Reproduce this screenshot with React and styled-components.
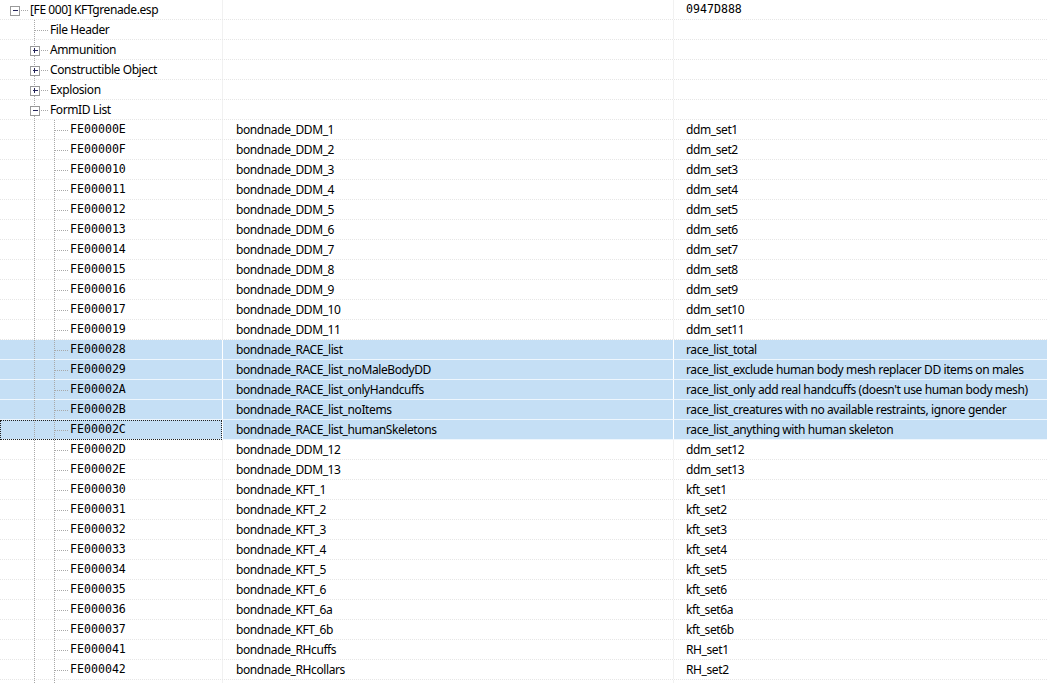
import React from 'react';
import styled, { createGlobalStyle } from 'styled-components';

const GlobalStyle = createGlobalStyle`
  html, body {
    margin: 0;
    padding: 0;
    background: #fff;
    overflow: hidden;
  }
`;

const TreeView = styled.div`
  width: 1047px;
  height: 683px;
  overflow: hidden;
  background: #fff;
  font-family: "Noto Sans", "Open Sans", sans-serif;
  font-size: 12px;
  letter-spacing: -0.4px;
  color: #000;
`;

const Row = styled.div`
  display: grid;
  grid-template-columns: 222px 451px 1fr;
  height: 20px;
  box-sizing: border-box;
  background: ${(p) => (p.$selected ? '#c5dff5' : '#fff')};
  border-bottom: 1px ${(p) => (p.$selected ? 'solid #eef6fd' : 'dotted #e6e6e6')};
`;

const NameCell = styled.div`
  display: flex;
  align-items: stretch;
  height: 20px;
  box-sizing: border-box;
  white-space: nowrap;
  outline: ${(p) => (p.$focused ? '1px dotted #222' : 'none')};
  outline-offset: -1px;
`;

const Label = styled.span`
  margin-left: 2px;
  line-height: 19px;
  font-family: ${(p) => (p.$mono ? '"DejaVu Sans Mono", monospace' : 'inherit')};
  font-size: ${(p) => (p.$mono ? '11.6px' : '12px')};
  letter-spacing: ${(p) => (p.$mono ? '0' : '-0.4px')};
`;

const Cell = styled.div`
  height: 19px;
  line-height: 19px;
  border-left: 1px solid ${(p) => (p.$selected ? '#ffffff' : '#f1f1f1')};
  padding-left: ${(p) => p.$pad}px;
  white-space: nowrap;
  overflow: hidden;
  font-family: ${(p) => (p.$mono ? '"DejaVu Sans Mono", monospace' : 'inherit')};
  font-size: ${(p) => (p.$mono ? '11.6px' : '12px')};
  letter-spacing: ${(p) => (p.$mono ? '0' : '-0.4px')};
`;

const Guide = styled.svg`
  flex: none;
  display: block;
`;

const LINE = '#a8a8a8';

// tree gutter: ancestor lines, own connector, and the +/- box
const TreeGutter = ({ level, expander }) => {
  const width = 28 + level * 20;
  const cx = 14.5 + level * 20;
  const parts = [];
  for (let k = 1; k < level; k++) {
    const x = 14.5 + k * 20;
    parts.push(<line key={'a' + k} x1={x} y1={0} x2={x} y2={21} stroke={LINE} strokeDasharray="1 1" />);
  }
  if (level > 0) {
    parts.push(<line key="v" x1={cx} y1={0} x2={cx} y2={21} stroke={LINE} strokeDasharray="1 1" />);
  }
  parts.push(<line key="h" x1={cx} y1={10.5} x2={cx + 13} y2={10.5} stroke={LINE} strokeDasharray="1 1" />);
  if (expander) {
    parts.push(
      <g key="box">
        <rect x={cx - 4.5} y={6} width={9} height={9} fill="#fff" stroke="#9a9a9a" />
        <line x1={cx - 2} y1={10.5} x2={cx + 3} y2={10.5} stroke="#26265a" />
        {expander === 'plus' && <line x1={cx} y1={8} x2={cx} y2={13} stroke="#26265a" />}
      </g>
    );
  }
  return (
    <Guide width={width} height={20} viewBox={`0 0 ${width} 20`} shapeRendering="crispEdges">
      {parts}
    </Guide>
  );
};

const header = [
  { level: 0, expander: 'minus', name: '[FE 000] KFTgrenade.esp', value: '0947D888', valueMono: true },
  { level: 1, name: 'File Header' },
  { level: 1, expander: 'plus', name: 'Ammunition' },
  { level: 1, expander: 'plus', name: 'Constructible Object' },
  { level: 1, expander: 'plus', name: 'Explosion' },
  { level: 1, expander: 'minus', name: 'FormID List' },
];

const records = [
  ['FE00000E', 'bondnade_DDM_1', 'ddm_set1'],
  ['FE00000F', 'bondnade_DDM_2', 'ddm_set2'],
  ['FE000010', 'bondnade_DDM_3', 'ddm_set3'],
  ['FE000011', 'bondnade_DDM_4', 'ddm_set4'],
  ['FE000012', 'bondnade_DDM_5', 'ddm_set5'],
  ['FE000013', 'bondnade_DDM_6', 'ddm_set6'],
  ['FE000014', 'bondnade_DDM_7', 'ddm_set7'],
  ['FE000015', 'bondnade_DDM_8', 'ddm_set8'],
  ['FE000016', 'bondnade_DDM_9', 'ddm_set9'],
  ['FE000017', 'bondnade_DDM_10', 'ddm_set10'],
  ['FE000019', 'bondnade_DDM_11', 'ddm_set11'],
  ['FE000028', 'bondnade_RACE_list', 'race_list_total', 'sel'],
  ['FE000029', 'bondnade_RACE_list_noMaleBodyDD', 'race_list_exclude human body mesh replacer DD items on males', 'sel'],
  ['FE00002A', 'bondnade_RACE_list_onlyHandcuffs', "race_list_only add real handcuffs (doesn't use human body mesh)", 'sel'],
  ['FE00002B', 'bondnade_RACE_list_noItems', 'race_list_creatures with no available restraints, ignore gender', 'sel'],
  ['FE00002C', 'bondnade_RACE_list_humanSkeletons', 'race_list_anything with human skeleton', 'focus'],
  ['FE00002D', 'bondnade_DDM_12', 'ddm_set12'],
  ['FE00002E', 'bondnade_DDM_13', 'ddm_set13'],
  ['FE000030', 'bondnade_KFT_1', 'kft_set1'],
  ['FE000031', 'bondnade_KFT_2', 'kft_set2'],
  ['FE000032', 'bondnade_KFT_3', 'kft_set3'],
  ['FE000033', 'bondnade_KFT_4', 'kft_set4'],
  ['FE000034', 'bondnade_KFT_5', 'kft_set5'],
  ['FE000035', 'bondnade_KFT_6', 'kft_set6'],
  ['FE000036', 'bondnade_KFT_6a', 'kft_set6a'],
  ['FE000037', 'bondnade_KFT_6b', 'kft_set6b'],
  ['FE000041', 'bondnade_RHcuffs', 'RH_set1'],
  ['FE000042', 'bondnade_RHcollars', 'RH_set2'],
];

const rows = [
  ...header,
  ...records.map(([id, edid, full, state]) => ({
    level: 2,
    name: id,
    mono: true,
    edid,
    value: full,
    selected: !!state,
    focused: state === 'focus',
  })),
  { level: 2, blank: true },
];

const App = () => (
  <>
    <GlobalStyle />
    <TreeView>
      {rows.map((r, i) => (
        <Row key={i} $selected={r.selected}>
          <NameCell $focused={r.focused}>
            <TreeGutter level={r.level} expander={r.expander} />
            {!r.blank && <Label $mono={r.mono}>{r.name}</Label>}
          </NameCell>
          <Cell $selected={r.selected} $pad={13}>{r.edid}</Cell>
          <Cell $selected={r.selected} $pad={12} $mono={r.valueMono}>{r.value}</Cell>
        </Row>
      ))}
    </TreeView>
  </>
);

export default App;
